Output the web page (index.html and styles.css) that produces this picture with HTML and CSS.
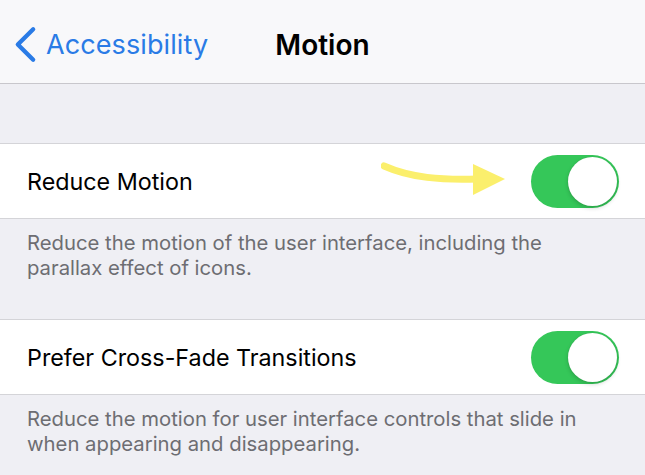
FILE: index.html
```html
<!DOCTYPE html>
<html lang="en">
  <head>
    <meta charset="UTF-8" />
    <meta name="viewport" content="width=device-width, initial-scale=1.0" />
    <title>Motion</title>
    <link rel="stylesheet" href="styles.css">
  </head>
  <body>
    <div class="screen">
      <div class="navbar">
        <a class="back">
          <svg class="chevron" viewBox="0 0 24 38">
            <polyline points="20,3 4,19 20,35"></polyline>
          </svg>
          <span>Accessibility</span>
        </a>
        <span class="title">Motion</span>
        <span></span>
      </div>

      <div class="spacer"></div>

      <div class="group">
        <div class="cell">
          <span class="label">Reduce Motion</span>
          <svg class="arrow" viewBox="0 0 130 40">
            <path class="shaft" d="M3,4 C30,16 60,18 96,17"></path>
            <polygon points="92,2 124,17 92,33"></polygon>
          </svg>
          <div class="switch on"><div class="knob"></div></div>
        </div>
      </div>
      <div class="footer">
        Reduce the motion of the user interface, including the parallax effect of icons.
      </div>

      <div class="group">
        <div class="cell">
          <span class="label">Prefer Cross-Fade Transitions</span>
          <div class="switch on"><div class="knob"></div></div>
        </div>
      </div>
      <div class="footer">
        Reduce the motion for user interface controls that slide in when appearing and disappearing.
      </div>
    </div>
  </body>
</html>
```

FILE: styles.css
```css
* {
  margin: 0;
  padding: 0;
  box-sizing: border-box;
}
body {
  width: 645px;
  height: 475px;
  overflow: hidden;
  background: #efeff4;
  font-family: Inter, "Noto Sans", sans-serif;
  color: #000;
}
.screen {
  display: flex;
  flex-direction: column;
}
/* nav bar */
.navbar {
  height: 84px;
  background: #f8f8fa;
  border-bottom: 1px solid #c8c7cc;
  display: grid;
  grid-template-columns: 1fr auto 1fr;
  align-items: center;
  padding-top: 6px;
}
.back {
  display: flex;
  align-items: center;
  gap: 9px;
  padding-left: 14px;
  color: #2a7be6;
  font-size: 27px;
  letter-spacing: 0.1px;
}
.chevron {
  width: 23px;
  height: 37px;
}
.chevron polyline {
  fill: none;
  stroke: #2a7be6;
  stroke-width: 4.5;
  stroke-linecap: round;
  stroke-linejoin: round;
}
.title {
  font-size: 28px;
  font-weight: 600;
}
.spacer {
  height: 59px;
}
/* rows */
.group {
  background: #fff;
  border-top: 1px solid #d4d4d8;
  border-bottom: 1px solid #d4d4d8;
}
.cell {
  height: 74px;
  display: flex;
  align-items: center;
  padding: 0 26px 0 27px;
  gap: 16px;
}
.label {
  font-size: 23.3px;
  flex: 1;
}
.arrow {
  width: 130px;
  height: 40px;
  margin-right: 4px;
  margin-top: 2px;
}
.arrow .shaft {
  fill: none;
  stroke: #fbef6c;
  stroke-width: 7;
  stroke-linecap: round;
}
.arrow polygon {
  fill: #fbef6c;
}
.switch {
  width: 88px;
  height: 53px;
  border-radius: 27px;
  background: #e5e5ea;
  padding: 2px;
  display: flex;
}
.switch.on {
  background: #35c759;
  justify-content: flex-end;
}
.knob {
  width: 49px;
  height: 49px;
  border-radius: 50%;
  background: #fff;
  box-shadow: 0 2px 4px rgba(0, 0, 0, 0.18), 0 0 1px rgba(0, 0, 0, 0.15);
}
/* section footers */
.footer {
  height: 100px;
  padding: 11px 30px 0 27px;
  font-size: 20.3px;
  line-height: 25px;
  color: #6d6d72;
}
```
